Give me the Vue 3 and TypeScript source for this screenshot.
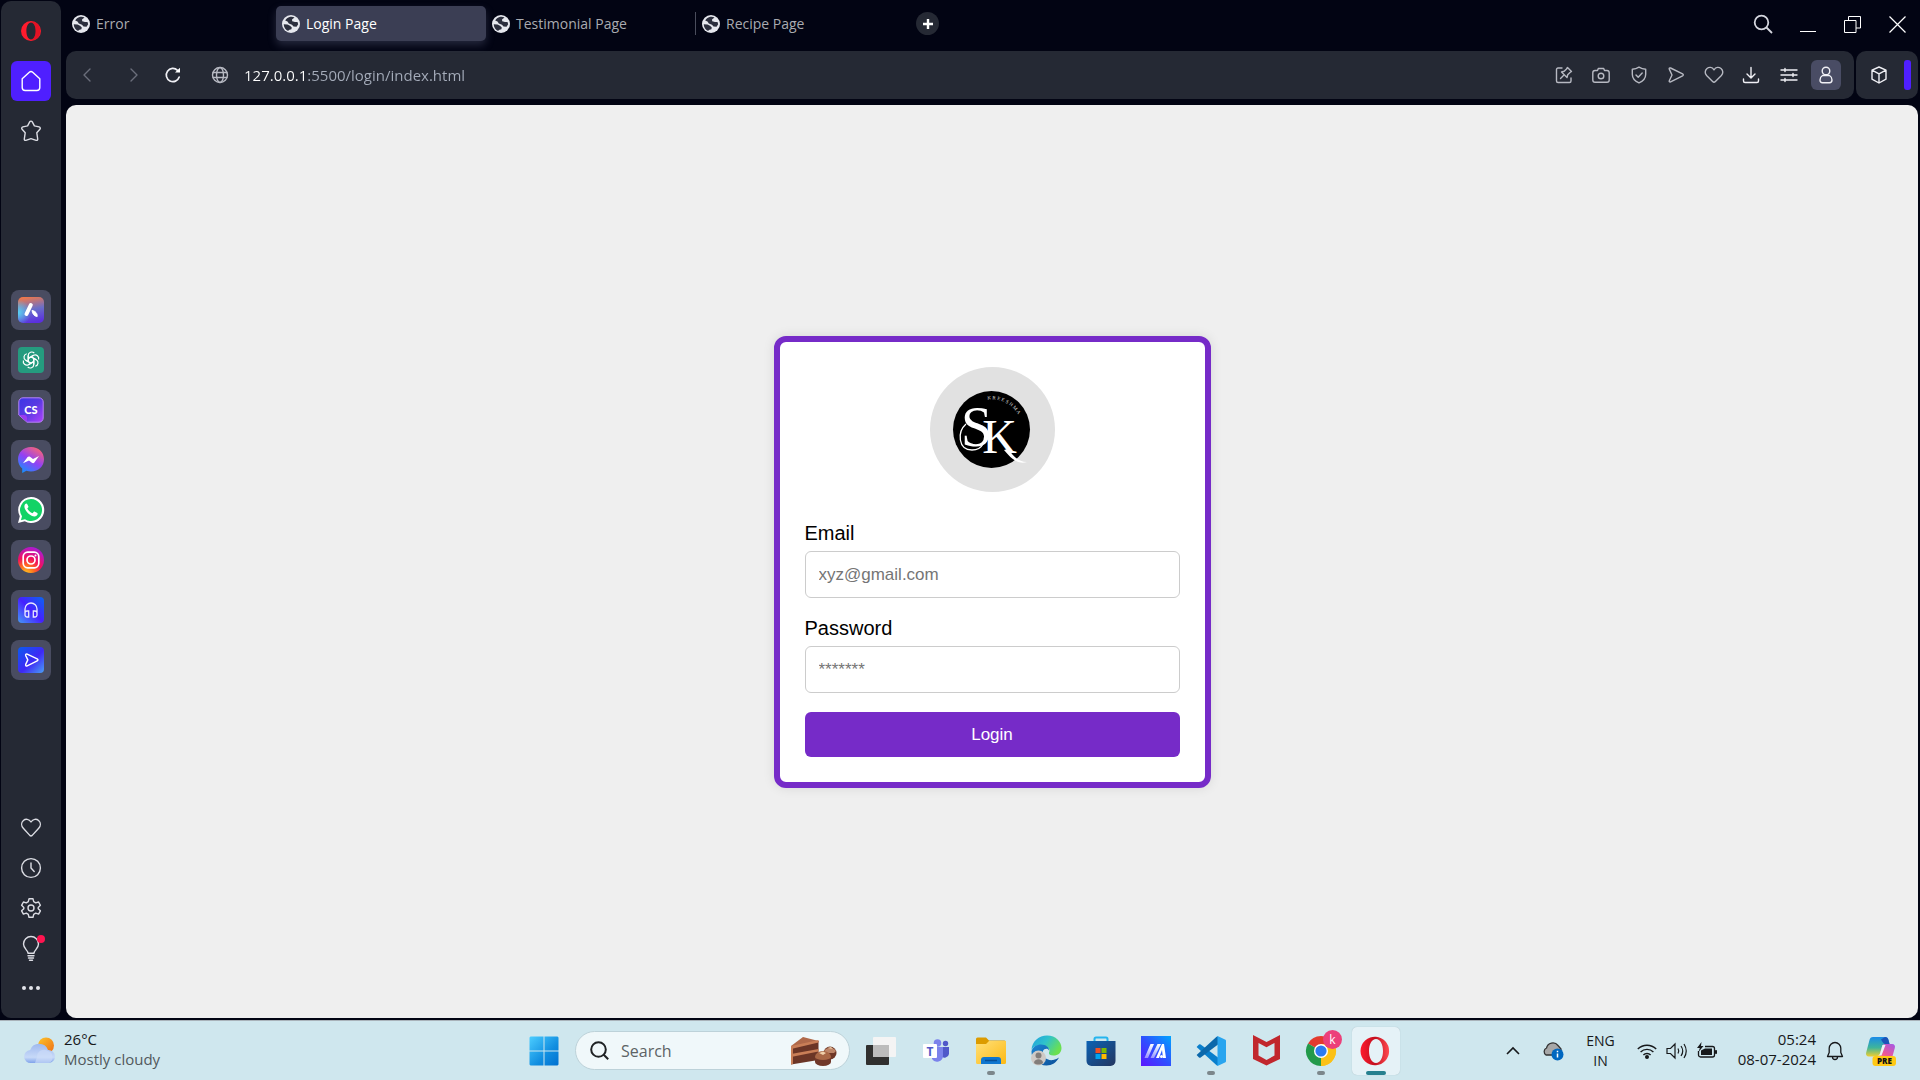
<script setup lang="ts">
import { ref } from 'vue'

interface Tab {
  id: number
  title: string
}

const tabs: Tab[] = [
  { id: 1, title: 'Error' },
  { id: 2, title: 'Login Page' },
  { id: 3, title: 'Testimonial Page' },
  { id: 4, title: 'Recipe Page' },
]
const activeTab = ref(2)
const address = ref('127.0.0.1:5500/login/index.html')
const email = ref('')
const password = ref('')
const query = ref('')
</script>

<template>
  <div class="desktop">
    <div class="browser">
      <aside class="sidebar">
        <button class="side-btn" type="button" aria-label="Opera menu">
          <svg width="20" height="20" viewBox="0 0 20 20">
            <path fill="#ff1b2d" fill-rule="evenodd" d="M10 0a10 10 0 1 0 0 20a10 10 0 0 0 0-20zM10 1.600c2.800 0 4.600 3.800 4.600 8.400s-1.800 8.400-4.600 8.400S5.400 14.600 5.400 10S7.200 1.600 10 1.600z" />
            <path fill="#a70014" d="M10 1.600c2-1 4.500-.4 6.200 1c2.300 2 3 4.600 3 7.400s-.8 5.600-3 7.400c-1.700 1.400-4.200 2-6.200 1c2.800 0 4.600-3.800 4.600-8.400S12.800 1.600 10 1.600z" opacity=".3" />
          </svg>
        </button>
        <button class="side-btn home" type="button" aria-label="Home">
          <svg class="line" width="22" height="22" viewBox="0 0 22 22">
            <path d="M2.200 8.800L9.300 2.200a2.500 2.500 0 0 1 3.400 0l7.100 6.600v8.700a3 3 0 0 1-3 3H5.200a3 3 0 0 1-3-3z" />
          </svg>
        </button>
        <button class="side-btn" type="button" aria-label="Bookmarks">
          <svg class="line" width="22" height="22" viewBox="0 0 22 22">
            <path d="M9.700 1.900c.6-1.100 2-1.100 2.600 0l2.100 4l4.700 1c1.200.3 1.600 1.500.8 2.400l-3.100 3.500l.9 6.200c.1 1-.6 1.600-1.600 1.300L11 18.700l-5.100 1.600c-1 .3-1.700-.3-1.600-1.300l.9-6.200l-3.100-3.500c-.8-.9-.4-2.100.8-2.400l4.700-1z" />
          </svg>
        </button>

        <nav class="apps" aria-label="Apps">
          <button class="side-btn app" type="button" aria-label="Aria">
            <svg width="26" height="26" viewBox="0 0 26 26">
              <defs>
                <linearGradient id="aria" x1="0.300" y1="0" x2="0.500" y2="1">
                  <stop offset="0" stop-color="#f0784a" /><stop offset=".5" stop-color="#6a6fc8" /><stop offset="1" stop-color="#5b2fe0" />
                </linearGradient>
                <radialGradient id="ariaglow" cx="0" cy=".6" r=".5">
                  <stop offset="0" stop-color="#58d3f5" /><stop offset="1" stop-color="#58d3f5" stop-opacity="0" />
                </radialGradient>
              </defs>
              <rect width="26" height="26" rx="5" fill="url(#aria)" /><rect width="26" height="26" rx="5" fill="url(#ariaglow)" />
              <path d="M12.800 8L8.500 17" stroke="#fff" stroke-width="4" stroke-linecap="round" />
              <path d="M14 13.500c3.500.5 5.500 3 5.200 6c-3-.2-4.700-2.700-5.200-6z" fill="#fff" stroke="#fff" />
            </svg>
          </button>
          <button class="side-btn app" type="button" aria-label="ChatGPT">
            <svg width="26" height="26" viewBox="0 0 26 26">
              <rect width="26" height="26" rx="4" fill="#259b7f" />
              <g fill="none" stroke="#fff" stroke-width="1.200" stroke-linejoin="round">
                <path v-for="n in 6" :key="n" :transform="`rotate(${n * 60} 13 13)`" d="M10.200 14.600V8.500a3.500 3.500 0 0 1 6.100-2.300M13 9.800l5.200 3" />
              </g>
            </svg>
          </button>
          <button class="side-btn app" type="button" aria-label="ChatSonic">
            <svg width="26" height="26" viewBox="0 0 26 26">
              <defs>
                <linearGradient id="sonic" x1="0" y1="0" x2="1" y2="1">
                  <stop offset="0" stop-color="#3a35e6" /><stop offset=".5" stop-color="#5a3ae2" /><stop offset="1" stop-color="#b040ff" />
                </linearGradient>
              </defs>
              <path d="M5 .8h16A4.200 4.200 0 0 1 25.200 5v16a4.200 4.200 0 0 1-4.200 4.200H9L.8 18V5A4.200 4.200 0 0 1 5 .8z" fill="url(#sonic)" stroke="#b583f5" />
              <path d="M1 18l8 7v-4a3 3 0 0 0-3-3z" fill="#9a3cf0" />
              <text x="13" y="17" text-anchor="middle" font-family="Lato, sans-serif" font-weight="900" font-size="11" fill="#fff">CS</text>
            </svg>
          </button>
          <button class="side-btn app" type="button" aria-label="Messenger">
            <svg width="26" height="26" viewBox="0 0 26 26">
              <defs>
                <linearGradient id="msgr" x1=".2" y1="1" x2=".8" y2="0">
                  <stop offset="0" stop-color="#1292ff" /><stop offset=".5" stop-color="#9340f5" /><stop offset="1" stop-color="#ff6670" />
                </linearGradient>
              </defs>
              <path d="M13 0C5.500 0 0 5.300 0 12.200c0 3.900 1.600 7 4.200 9.200V26l4.200-2.200c1.400.5 3 .7 4.600.7c7.500 0 13-5.300 13-12.300S20.500 0 13 0z" fill="url(#msgr)" />
              <path d="M5 16.300l4.600-6.200c.7-.9 1.700-.8 2.400-.3l3 2.300l6-3.200l-4.600 6.600c-.7.900-1.700.9-2.500.3l-2.900-2.200z" fill="#fff" />
            </svg>
          </button>
          <button class="side-btn app" type="button" aria-label="WhatsApp">
            <svg width="26" height="26" viewBox="0 0 26 26">
              <path d="M13 0a13 13 0 0 0-11.200 19.300L0 26l6.800-1.700A13 13 0 1 0 13 0z" fill="#fff" />
              <path d="M13 2a11 11 0 0 0-9 17.200L2.900 23.200l4.100-1A11 11 0 1 0 13 2z" fill="#12d366" />
              <path d="M9.300 7.200c-.5-1-1.300-.8-2-.1c-1.600 1.700-1 4.400 1 7.100s5 4.900 8 5.200c1.600.1 3-.9 3.300-2.200c.2-.9 0-1.100-.7-1.500l-2.100-1c-.5-.2-.8-.1-1.200.4l-1 1.200c-2.400-.8-4.300-2.500-5.300-4.700l1-1.300c.2-.3.200-.6.100-.9z" fill="#fff" />
            </svg>
          </button>
          <button class="side-btn app" type="button" aria-label="Instagram">
            <svg width="26" height="26" viewBox="0 0 26 26">
              <defs>
                <radialGradient id="insta" cx=".3" cy="1.050" r="1.150">
                  <stop offset="0" stop-color="#ffd020" /><stop offset=".3" stop-color="#ff6a20" /><stop offset=".55" stop-color="#f3105c" /><stop offset="1" stop-color="#a01ce8" />
                </radialGradient>
              </defs>
              <circle cx="13" cy="13" r="13" fill="url(#insta)" />
              <g fill="none" stroke="#fff" stroke-width="1.700">
                <rect x="5.200" y="5.200" width="15.600" height="15.600" rx="4.500" /><circle cx="13" cy="13" r="4" />
              </g>
              <circle cx="17.500" cy="8.500" r="1" fill="#fff" />
            </svg>
          </button>
          <button class="side-btn app" type="button" aria-label="Player">
            <svg width="26" height="26" viewBox="0 0 26 26">
              <defs>
                <linearGradient id="player" x1="1" y1="0" x2="0" y2="1">
                  <stop offset="0" stop-color="#0a66f0" /><stop offset=".5" stop-color="#4620ff" /><stop offset="1" stop-color="#459af5" />
                </linearGradient>
              </defs>
              <rect width="26" height="26" rx="4" fill="url(#player)" />
              <path d="M7 16V12a6 6 0 0 1 12 0v4M10.700 14v6H9.300a2 2 0 0 1-2.300-2v-2a2 2 0 0 1 2.300-2zM15.300 14v6h1.400a2 2 0 0 0 2.300-2v-2a2 2 0 0 0-2.300-2z" fill="none" stroke="#e8e8ff" stroke-width="1.300" />
            </svg>
          </button>
          <button class="side-btn app" type="button" aria-label="My Flow">
            <svg width="26" height="26" viewBox="0 0 26 26">
              <defs>
                <linearGradient id="flow" x1="0" y1="0" x2="1" y2="1">
                  <stop offset="0" stop-color="#0a5cf0" /><stop offset=".55" stop-color="#3f28f5" /><stop offset="1" stop-color="#4aa0f5" />
                </linearGradient>
              </defs>
              <rect width="26" height="26" rx="4" fill="url(#flow)" />
              <path d="M9.200 7.200l10 4.600c1 .5 1 1.500 0 2l-10 5c-1.100.5-1.900-.4-1.500-1.400l2.100-4.500l-2.100-4.300c-.4-1 .4-1.900 1.500-1.400z" fill="none" stroke="#fff" stroke-width="1.400" stroke-linejoin="round" />
            </svg>
          </button>
        </nav>

        <div class="side-bottom">
          <button class="side-btn" type="button" aria-label="Pinboards">
            <svg class="line" width="22" height="22" viewBox="0 0 22 22">
              <path d="M11 5C9 1.800 5.500 1.700 3.400 3.500C1 5.700 1.200 9 3.300 11.300l6.500 7.100c.8.700 1.600.7 2.400 0l6.500-7.100C20.800 9 21 5.700 18.600 3.500C16.500 1.700 13 1.800 11 5z" />
            </svg>
          </button>
          <button class="side-btn" type="button" aria-label="History">
            <svg class="line" width="22" height="22" viewBox="0 0 22 22">
              <circle cx="11" cy="11" r="9.400" /><path d="M11 6v5l3.200 3.500" />
            </svg>
          </button>
          <button class="side-btn" type="button" aria-label="Settings">
            <svg class="line" width="22" height="22" viewBox="0 0 22 22">
              <path d="M9 1.800h4l.7 2.900l2 1.200l2.900-.9l1.800 3.300L18.200 10.400v1.300l2.200 2.100l-1.800 3.300l-2.900-.9l-2 1.200l-.7 2.900H9l-.7-2.900l-2-1.200l-2.900.9l-1.800-3.300l2.200-2.100v-1.300L1.600 8.300L3.400 5l2.900.9l2-1.200z" /><circle cx="11" cy="11" r="3" />
            </svg>
          </button>
          <button class="side-btn" type="button" aria-label="Tips">
            <svg class="line" width="28" height="26" viewBox="0 0 28 26">
              <path d="M11 18.300c0-3-4.500-4.800-4.500-9.300a7.500 7.500 0 0 1 15 0c0 4.500-4.500 6.300-4.500 9.300zM11 20.700h6M11.500 23h5M12.500 25.200h3" />
              <circle cx="24" cy="4" r="4" class="dot" />
            </svg>
          </button>
          <button class="side-btn" type="button" aria-label="More">
            <svg width="20" height="6" viewBox="0 0 20 6" fill="#e3e4ea">
              <circle cx="3" cy="3" r="2" /><circle cx="10" cy="3" r="2" /><circle cx="17" cy="3" r="2" />
            </svg>
          </button>
        </div>
      </aside>

      <div class="main">
        <div class="tab-row">
          <div class="tabs" role="tablist">
            <button
              v-for="tab in tabs"
              :key="tab.id"
              type="button"
              role="tab"
              class="tab"
              :class="{ active: tab.id === activeTab, divided: tab.id > activeTab + 1 }"
              :aria-selected="tab.id === activeTab"
              @click="activeTab = tab.id"
            >
              <svg width="18" height="18" viewBox="0 0 18 18">
                <circle cx="9" cy="9" r="9" fill="#e6e8ee" />
                <path d="M7 2.200c2-.8 4-.6 5.500.2L10 4.500l.2 1.800L13 7h2.500l.7 2.200l-1.700 2.600l-3-.2L10 9.800L6.800 8.500L5.500 6.500L3.200 5.500C4 3.800 5.400 2.700 7 2.200z" fill="#2b2e3d" />
                <path d="M1.700 9.200l3.800.3l2.500 1.300l1.800 1.700l-.4 1.800l-2.600.7l-.6 1C3.700 15 1.800 12.500 1.700 9.200z" fill="#2b2e3d" />
              </svg>
              <span>{{ tab.title }}</span>
            </button>
          </div>
          <button class="new-tab" type="button" aria-label="New tab">
            <svg width="10" height="10" viewBox="0 0 10 10"><path d="M5 0v10M0 5h10" stroke="#fff" stroke-width="2.400" /></svg>
          </button>
          <div class="window-controls">
            <button type="button" aria-label="Search tabs">
              <svg width="20" height="20" viewBox="0 0 20 20" fill="none" stroke="#d4d6de" stroke-width="1.800"><circle cx="8.500" cy="8.500" r="6.800" /><path d="M13.500 13.500l5.500 5.500" /></svg>
            </button>
            <button type="button" aria-label="Minimize">
              <svg width="16" height="16" viewBox="0 0 16 16"><path d="M0 15.500h16" stroke="#fff" /></svg>
            </button>
            <button type="button" aria-label="Restore">
              <svg width="17" height="17" viewBox="0 0 17 17" fill="none" stroke="#fff"><path d="M.5 4.500h11.500v12H.5zM4.500 4.500v-4h12v11.500h-4.500" /></svg>
            </button>
            <button type="button" aria-label="Close">
              <svg width="17" height="17" viewBox="0 0 17 17" fill="none" stroke="#fff" stroke-width="1.200"><path d="M.5.5l16 16M16.500.5l-16 16" /></svg>
            </button>
          </div>
        </div>

        <div class="toolbar-row">
          <div class="toolbar">
            <div class="nav">
              <button class="dim back" type="button" aria-label="Back">
                <svg class="line" width="14" height="14" viewBox="0 0 14 14"><path d="M10 1L4 7l6 6" /></svg>
              </button>
              <button class="dim" type="button" aria-label="Forward">
                <svg class="line" width="14" height="14" viewBox="0 0 14 14"><path d="M4 1l6 6l-6 6" /></svg>
              </button>
              <button class="bright" type="button" aria-label="Reload">
                <svg class="line" width="16" height="16" viewBox="0 0 16 16"><path d="M14.200 10A6.600 6.600 0 1 1 12.500 3.300" stroke-width="1.700" /><path d="M10 5.500h5V.8z" fill="#fff" stroke="none" /></svg>
              </button>
            </div>
            <label class="address">
              <svg class="line" width="18" height="18" viewBox="0 0 18 18" aria-hidden="true">
                <circle cx="9" cy="9" r="7.500" /><ellipse cx="9" cy="9" rx="3.500" ry="7.500" /><path d="M2.200 6.500h13.600M2.200 11.500h13.600" />
              </svg>
              <input v-model="address" type="text" aria-label="Address" spellcheck="false" />
            </label>
            <div class="actions">
              <button type="button" aria-label="Edit page">
                <svg class="line" width="18" height="18" viewBox="0 0 18 18">
                  <path d="M7 2H3a1.500 1.500 0 0 0-1.500 1.500v11.500a1.500 1.500 0 0 0 1.500 1.500h11.500a1.500 1.500 0 0 0 1.500-1.500V12" />
                  <path d="M12.500 1.500l4 4l-1.500 1l-2.300 2.300l-.7 2.700l-5.500-5.500l2.700-.7L11.500 3zM9 9L5.500 12.500" />
                </svg>
              </button>
              <button type="button" aria-label="Snapshot">
                <svg class="line" width="18" height="18" viewBox="0 0 18 18"><path d="M5.500 4.500L6.300 2.500h5.400l.8 2h2.500A2.200 2.200 0 0 1 17.200 6.700v7.300a2.200 2.200 0 0 1-2.200 2.200H3A2.200 2.200 0 0 1 .8 14V6.700A2.200 2.200 0 0 1 3 4.500z" /><circle cx="9" cy="10" r="2.800" /></svg>
              </button>
              <button type="button" aria-label="Ad blocker">
                <svg class="line" width="18" height="18" viewBox="0 0 18 18"><path d="M9 1.200c2 1.300 4.200 2 6.700 2v5c0 4-2.400 6.800-6.700 8.600c-4.300-1.800-6.700-4.600-6.700-8.600v-5c2.500 0 4.700-.7 6.700-2zM6 9l2.200 2.200l4-4.200" /></svg>
              </button>
              <button type="button" aria-label="Send to My Flow">
                <svg class="line" width="18" height="18" viewBox="0 0 18 18"><path d="M3.600 2l12 5.900c.9.500.9 1.400 0 1.900l-12 6c-1 .4-1.700-.2-1.300-1.100L5 9L2.300 3.100C1.900 2.200 2.600 1.600 3.600 2z" /></svg>
              </button>
              <button type="button" aria-label="Add to pinboard">
                <svg class="line" width="20" height="18" viewBox="0 0 20 18"><path d="M10 3.800C8 .8 5 .9 3 2.500C.7 4.500.7 7.500 2.600 9.500l6 6c.9.900 1.900.9 2.800 0l6-6C19.300 7.500 19.300 4.500 17 2.500C15 .9 12 .8 10 3.800z" /></svg>
              </button>
              <button class="bright" type="button" aria-label="Downloads">
                <svg class="line" width="18" height="18" viewBox="0 0 18 18"><path d="M9 1.500v10M5 8l4 4l4-4M1.500 13v2a1.500 1.500 0 0 0 1.500 1.500h12a1.500 1.500 0 0 0 1.500-1.500v-2" /></svg>
              </button>
              <button class="bright" type="button" aria-label="Easy setup">
                <svg class="line" width="18" height="18" viewBox="0 0 18 18"><path d="M1 4h16M1 9h16M1 14h16M5 2.500v3M13 7.500v3M5 12.500v3" /></svg>
              </button>
              <button class="bright profile" type="button" aria-label="Profile">
                <svg class="line" width="18" height="18" viewBox="0 0 18 18"><circle cx="9" cy="5" r="3.800" /><path d="M5.500 9.500h7c1.700 1 2.500 2.700 2.500 4.500c0 1.700-.9 2.700-2.500 2.700h-7C3.900 16.700 3 15.700 3 14c0-1.800.8-3.500 2.500-4.500z" /></svg>
              </button>
            </div>
          </div>
          <div class="side-panel">
            <button class="bright" type="button" aria-label="Extensions">
              <svg class="line" width="18" height="18" viewBox="0 0 18 18"><path d="M9 1l7 3.200v9L9 17l-7-3.800v-9zM2 4.200l7 3.600l7-3.600M9 7.800V17" /></svg>
            </button>
            <span class="accent"></span>
          </div>
        </div>

        <main class="page">
          <form class="card" @submit.prevent>
            <div class="avatar">
              <svg width="125" height="125" viewBox="0 0 125 125" role="img" aria-label="SK logo">
                <circle cx="61.500" cy="62.500" r="38.500" fill="#000" />
                <path id="arc" d="M57.500 32.500A31 31 0 0 1 92 58" fill="none" />
                <text font-family="Liberation Serif, serif" font-size="5" fill="#ddd"><textPath href="#arc">K R E E S H M A</textPath></text>
                <text font-family="Liberation Serif, serif" fill="#fff" x="31" y="79" font-size="56">S<tspan dx="-10" dy="7" font-size="48">K</tspan></text>
                <path d="M36 57c-9 8-8 26 6 26c5 0 9-2 11-6" fill="none" stroke="#fff" stroke-width="1.300" />
                <path d="M78 82c5 6 9 13 19 13c-10 3-17-5-23-12z" fill="#fff" />
              </svg>
            </div>
            <div class="field">
              <label for="email">Email</label>
              <input id="email" v-model="email" type="email" placeholder="xyz@gmail.com" />
            </div>
            <div class="field">
              <label for="password">Password</label>
              <input id="password" v-model="password" type="password" placeholder="*******" />
            </div>
            <button class="login" type="submit">Login</button>
          </form>
        </main>
      </div>
    </div>

    <footer class="taskbar">
      <button class="weather" type="button">
        <svg width="32" height="28" viewBox="0 0 32 28">
          <defs>
            <linearGradient id="sun" x1="0" y1="0" x2="1" y2="1"><stop offset="0" stop-color="#fdc52a" /><stop offset="1" stop-color="#ee6c16" /></linearGradient>
            <linearGradient id="cloud" x1="0" y1="0" x2="0" y2="1"><stop offset="0" stop-color="#9fb9ee" /><stop offset=".7" stop-color="#c7d9f8" /><stop offset="1" stop-color="#7fa3ea" /></linearGradient>
          </defs>
          <circle cx="22" cy="8.500" r="8" fill="url(#sun)" />
          <path d="M7 26a6.500 6.500 0 0 1-.8-13A9.500 9.500 0 0 1 24 13a6.500 6.500 0 0 1 1 13z" fill="url(#cloud)" />
          <path d="M13 20a7 7 0 0 1 11-6a6.500 6.500 0 0 1 1 12H11z" fill="#cfdef9" opacity=".6" />
        </svg>
        <span class="stack"><span>26°C</span><span class="muted">Mostly cloudy</span></span>
      </button>

      <div class="task-icons">
        <button class="task" type="button" aria-label="Start">
          <svg width="30" height="30" viewBox="0 0 30 30">
            <defs><linearGradient id="win" x1="0" y1="0" x2="1" y2="1"><stop offset="0" stop-color="#4ccdff" /><stop offset=".6" stop-color="#118ee0" /><stop offset="1" stop-color="#0070d0" /></linearGradient></defs>
            <path d="M1.500.5H14.500v14H.5v-13zM15.500.5h13l1 1v13h-14zM.5 15.500h14v14h-13l-1-1zM15.500 15.500h14v13l-1 1h-13z" fill="url(#win)" />
          </svg>
        </button>
        <label class="search">
          <svg width="19" height="19" viewBox="0 0 19 19" fill="none" stroke="#1f2224" stroke-width="2" aria-hidden="true"><circle cx="8.500" cy="8.500" r="7.300" /><path d="M13.500 13.500l4.700 4.700" /></svg>
          <input v-model="query" type="text" placeholder="Search" aria-label="Search" />
          <svg width="46" height="30" viewBox="0 0 46 30" aria-hidden="true">
            <path d="M0 10L12 1l15.500 4L27.500 6L0 12z" fill="#b0694a" /><path d="M0 11l27.500-6v19L0 28.500z" fill="#6b3526" />
            <path d="M0 10l27.500-6v2.500L0 13zM0 18l27.500-5v2.500L0 21z" fill="#c97e57" /><path d="M0 10l2 1v17l-2 .5z" fill="#c97e57" />
            <circle cx="39" cy="17" r="6.500" fill="#6e3727" /><path d="M33 15a6.500 5 0 0 1 12 0l-2 2h-8z" fill="#bd8467" />
            <path d="M24 20h16v6a8 4 0 0 1-16 0z" fill="#70382a" /><path d="M24 21a8 6 0 0 1 16 0a8 3 0 0 1-16 0z" fill="#a96746" /><path d="M28 17l4-1.500l3 1.500l-3 2zM36 12l4-1l2 2z" fill="#f0cfaa" />
          </svg>
        </label>
        <button class="task" type="button" aria-label="Task view">
          <svg width="30" height="30" viewBox="0 0 30 30">
            <rect x="0" y="9" width="23" height="20" rx="1" fill="#30302f" /><rect x="7" y="1" width="23" height="20" rx="1" fill="#f4f4f4" /><path d="M7 9h16v12H7z" fill="#bcbcbc" />
          </svg>
        </button>
        <button class="task" type="button" aria-label="Teams">
          <svg width="26" height="26" viewBox="0 0 26 26">
            <circle cx="14.500" cy="5" r="3.800" fill="#7b83eb" /><circle cx="22.500" cy="5.500" r="2.700" fill="#5059c9" />
            <path d="M18 9h8v7a4.500 4.500 0 0 1-8 2z" fill="#5059c9" /><path d="M9 9h11v9a6 6 0 0 1-11 3z" fill="#7b83eb" />
            <rect x="0" y="6" width="14" height="14" rx="1" fill="#fff" /><text x="7" y="17.500" text-anchor="middle" font-family="Open Sans, sans-serif" font-weight="700" font-size="12" fill="#5059c9">T</text>
          </svg>
        </button>
        <button class="task running" type="button" aria-label="File Explorer">
          <svg width="30" height="28" viewBox="0 0 30 28">
            <defs><linearGradient id="folder" x1="0" y1="0" x2="1" y2="1"><stop offset="0" stop-color="#ffe07a" /><stop offset="1" stop-color="#fdb913" /></linearGradient></defs>
            <path d="M0 2a1.500 1.500 0 0 1 1.500-1.500H10L13 3.500H28.500A1.500 1.500 0 0 1 30 5v4H0z" fill="#dc9b00" /><path d="M0 7h10l3-3h17v21.500a1.500 1.500 0 0 1-1.500 1.500h-27A1.500 1.500 0 0 1 0 25.500z" fill="url(#folder)" />
            <path d="M5 27v-4a3 3 0 0 1 3-3h14a3 3 0 0 1 3 3v4z" fill="#0f76cf" /><path d="M9 23.500h12" stroke="#064f96" stroke-width="1.500" />
          </svg>
        </button>
        <button class="task" type="button" aria-label="Edge">
          <svg width="31" height="31" viewBox="0 0 31 31">
            <defs>
              <linearGradient id="edge1" x1="0" y1="0" x2="1" y2=".5"><stop offset="0" stop-color="#1f9fe0" /><stop offset=".5" stop-color="#2fc2cc" /><stop offset="1" stop-color="#6be050" /></linearGradient>
              <linearGradient id="edge2" x1="0" y1="0" x2="1" y2="1"><stop offset="0" stop-color="#1b86d4" /><stop offset="1" stop-color="#0c4f98" /></linearGradient>
            </defs>
            <path d="M.5 15C1 6 8 .5 16 .5c9 0 14.500 6.500 14.500 12.500c0 5-3.500 7.500-8 7.500c-3.500 0-5-1.300-4.500-3C20 14 16 10 10 10c-5 0-8 2-9.500 5z" fill="url(#edge1)" />
            <path d="M.5 16C2 11.500 6 9.500 10 9.500c5 0 8.500 3 8 6c-1-2.500-5-2-6 .5c-2 5 4 10 10 9c2.500-.4 4.500-1.500 6-2.500c-2.500 5-7 8-12.500 8C7 30.500 0 24 .5 16z" fill="url(#edge2)" />
            <circle cx="7.500" cy="23" r="7.500" fill="#cfcac6" /><circle cx="7.500" cy="20.500" r="3" fill="#827d7a" /><path d="M3 28c0-5 9-5 9 0c-2.500 2-6.500 2-9 0z" fill="#827d7a" />
          </svg>
        </button>
        <button class="task" type="button" aria-label="Microsoft Store">
          <svg width="30" height="30" viewBox="0 0 30 30">
            <defs><linearGradient id="store" x1="0" y1="0" x2="1" y2="1"><stop offset="0" stop-color="#0b62b4" /><stop offset="1" stop-color="#24365f" /></linearGradient></defs>
            <path d="M8.500 6V3A1.500 1.500 0 0 1 10 1.500h10A1.500 1.500 0 0 1 21.500 3v3" fill="none" stroke="#25b5ee" stroke-width="2" />
            <path d="M.5 5h29v20a5 5 0 0 1-5 5h-19a5 5 0 0 1-5-5z" fill="url(#store)" />
            <path d="M9.500 12h5v5h-5z" fill="#f25022" /><path d="M15.500 12h5v5h-5z" fill="#7fba00" /><path d="M9.500 18h5v5h-5z" fill="#00a4ef" /><path d="M15.500 18h5v5h-5z" fill="#ffb900" />
          </svg>
        </button>
        <button class="task" type="button" aria-label="MyASUS">
          <svg width="30" height="30" viewBox="0 0 30 30">
            <defs>
              <linearGradient id="asus" x1="0" y1="1" x2="1" y2="0"><stop offset="0" stop-color="#5c15ff" /><stop offset=".5" stop-color="#2f50ff" /><stop offset="1" stop-color="#00a5ff" /></linearGradient>
              <linearGradient id="bar" x1="0" y1="0" x2="0" y2="1"><stop offset="0" stop-color="#fff" /><stop offset="1" stop-color="#fff" stop-opacity=".45" /></linearGradient>
            </defs>
            <rect width="30" height="30" fill="url(#asus)" />
            <path d="M3.500 22L9.500 8h3.500l-6 14zM9.500 22L16.500 8H20l-7 14z" fill="url(#bar)" />
            <path d="M15 22L21 8h2l2 14h-3l-1-8l-3 8z" fill="#fff" /><circle cx="20.500" cy="20.500" r="1.500" fill="#fff" />
          </svg>
        </button>
        <button class="task running" type="button" aria-label="Visual Studio Code">
          <svg width="30" height="30" viewBox="0 0 30 30">
            <path d="M.6 11L3 8.500q.8-.6 1.700 0L22 21.500v8q-1 .3-2-.7z" fill="#0a7fcc" /><path d="M.6 19L3 21.500q.8.600 1.700 0L22 8.500v-8q-1-.3-2 .7z" fill="#0b68ab" />
            <path d="M22 .3l7 3.200a1.500 1.500 0 0 1 1 1.500v20a1.500 1.500 0 0 1-1 1.500l-7 3.200c-1 .3-1.500 0-2-.5c.8.600 1.500 0 1.500-1V1.800c0-1-.7-1.600-1.500-1C20.500.3 21 0 22 .3z" fill="#29a5ef" />
          </svg>
        </button>
        <button class="task" type="button" aria-label="McAfee">
          <svg width="27" height="31" viewBox="0 0 27 31">
            <path d="M0 0l13.500 7L27 0v24l-13.500 6.500L0 24zM5.500 8v12.500l8 4.500l8-4.500V8l-8 4.200z" fill="#c1272d" fill-rule="evenodd" />
          </svg>
        </button>
        <button class="task running" type="button" aria-label="Chrome">
          <svg width="30" height="30" viewBox="0 0 30 30">
            <path d="M15 15L2 7.500A15 15 0 0 1 28 7.500z" fill="#e33b2e" /><path d="M15 15L28 7.500A15 15 0 0 1 15 30z" fill="#fbc116" /><path d="M15 15v15A15 15 0 0 1 2 7.500z" fill="#229a4a" />
            <path d="M15 8h13.200A15 15 0 0 1 15 30l6-11z" fill="#fbc116" /><circle cx="15" cy="15" r="7" fill="#fff" /><circle cx="15" cy="15" r="5.600" fill="#2d7bf0" />
          </svg>
          <span class="badge">k</span>
        </button>
        <button class="task running current" type="button" aria-label="Opera">
          <svg width="30" height="30" viewBox="0 0 30 30">
            <defs><linearGradient id="op" x1="0" y1="0" x2="1" y2="0"><stop offset="0" stop-color="#ff1b2d" /><stop offset=".5" stop-color="#c2101f" /><stop offset="1" stop-color="#ff4a50" /></linearGradient></defs>
            <path fill="url(#op)" fill-rule="evenodd" d="M15 .8a14.300 14.300 0 1 0 0 28.500a14.300 14.300 0 0 0 0-28.500zM15 3c4.200 0 7 5.400 7 12s-2.800 12-7 12s-7-5.400-7-12S10.800 3 15 3z" />
          </svg>
        </button>
      </div>

      <div class="tray">
        <button type="button" aria-label="Hidden icons">
          <svg width="14" height="10" viewBox="0 0 14 10" fill="none" stroke="#17191b" stroke-width="1.600"><path d="M1 8l6-6l6 6" /></svg>
        </button>
        <button type="button" aria-label="OneDrive">
          <svg width="22" height="20" viewBox="0 0 22 20">
            <path d="M4 14a4 4 0 0 1 .5-7A6.500 6.500 0 0 1 16 4.500L19 8v6z" fill="#a7a7a7" stroke="#333" stroke-width="1.300" />
            <circle cx="15.500" cy="13.500" r="6" fill="#0067c0" /><path d="M15.500 12.500v4M15.500 9.800v1.500" stroke="#fff" stroke-width="1.500" />
          </svg>
        </button>
        <button class="lang" type="button"><span>ENG</span><span>IN</span></button>
        <button class="status" type="button" aria-label="Network, volume and battery">
          <svg width="20" height="16" viewBox="0 0 20 16" fill="none" stroke="#17191b" stroke-width="1.400">
            <path d="M.8 6a13 13 0 0 1 18.400 0M3.600 9a9 9 0 0 1 12.800 0M6.400 12a5 5 0 0 1 7.200 0" /><circle cx="10" cy="14" r="1.300" fill="#17191b" />
          </svg>
          <svg width="22" height="18" viewBox="0 0 22 18" fill="none" stroke="#17191b" stroke-width="1.200">
            <path d="M1 6.500h3.500L9 2v14l-4.500-4.500H1zM12 6.500q1.500 2.500 0 5M15 4q3.500 5 0 10M18 2q4.500 7 0 14" />
          </svg>
          <svg width="19" height="17" viewBox="0 0 19 17">
            <path d="M8 4.500h7.500a2 2 0 0 1 2 2v6.500a2 2 0 0 1-2 2H3.500a2 2 0 0 1-2-2v-4" fill="none" stroke="#17191b" stroke-width="1.300" /><path d="M4 8.500l4-2h7v6.500H4z" fill="#17191b" /><path d="M18.500 8.500h1v3h-1z" fill="#17191b" stroke="#17191b" /><path d="M4.500 0L0 6h2.800L1.500 10L6.500 4H4z" fill="#17191b" />
          </svg>
        </button>
        <div class="clock-group">
          <button class="clock" type="button"><span>05:24</span><span>08-07-2024</span></button>
          <button type="button" aria-label="Notifications">
            <svg width="18" height="20" viewBox="0 0 18 20" fill="none" stroke="#17191b" stroke-width="1.300" stroke-linejoin="round"><path d="M9 1.500a5.800 5.800 0 0 1 5.800 5.800v4.200l1.700 4H1.500l1.700-4V7.300A5.800 5.800 0 0 1 9 1.500zM6.500 16a2.500 2.500 0 0 0 5 0" /></svg>
          </button>
        </div>
        <button type="button" aria-label="Copilot">
          <svg width="30" height="30" viewBox="0 0 30 30">
            <defs>
              <linearGradient id="cp1" x1="0" y1="0" x2="0" y2="1"><stop offset="0" stop-color="#1a8be8" /><stop offset=".55" stop-color="#3fb59a" /><stop offset="1" stop-color="#f0cf30" /></linearGradient>
              <linearGradient id="cp2" x1="1" y1="0" x2="0" y2="1"><stop offset="0" stop-color="#a259e8" /><stop offset=".6" stop-color="#ee5796" /><stop offset="1" stop-color="#ff9a50" /></linearGradient>
            </defs>
            <path d="M7 1h12c2 0 3 1 3.500 3L23.500 8h-4c-2 0-3 1-3.500 3l-2 7c-.5 1.500-1.500 2.500-3 2.500H3c-2.500 0-3.500-2-2.800-4L3.500 4C4 2 5 1 7 1z" fill="url(#cp1)" />
            <path d="M19 1c2 0 3 1 3.500 3L23.500 8h-4C17.500 8 16.500 6 15 3.500z" fill="#1c54b8" />
            <path d="M19.500 8H26c2.500 0 3.500 2 2.800 4L26 22H8c3 0 5-1.500 6-4l2-7c.5-2 1.500-3 3.500-3z" fill="url(#cp2)" /><path d="M16.500 9h3l-4 10.500h-4c1.500 0 2-1 2.500-2z" fill="#eaf4f6" />
            <rect x="6.500" y="20" width="23.500" height="10" rx="3" fill="#ffc914" /><text x="18.500" y="27.800" text-anchor="middle" font-family="Open Sans, sans-serif" font-size="8" font-weight="800" fill="#111">PRE</text>
          </svg>
        </button>
      </div>
    </footer>
  </div>
</template>

<style>
body {
  margin: 0;
}
</style>

<style scoped>
.desktop {
  min-height: 100vh;
  display: flex;
  flex-direction: column;
  font-family: "Open Sans", "Noto Sans", sans-serif;
  font-size: 14px;
}

.desktop *,
.desktop *::before {
  box-sizing: border-box;
}

button {
  display: flex;
  align-items: center;
  justify-content: center;
  padding: 0;
  border: 0;
  background: none;
  color: inherit;
  font: inherit;
  cursor: pointer;
}

input {
  min-width: 0;
  font: inherit;
}

svg {
  flex: none;
  overflow: visible;
}

.line {
  fill: none;
  stroke: currentColor;
  stroke-width: 1.4;
  stroke-linecap: round;
  stroke-linejoin: round;
}

.browser {
  flex: 1;
  display: flex;
  gap: 5px;
  padding: 0 0 2px 1px;
  background: #020413;
}

/* Sidebar */
.sidebar {
  flex: 0 0 60px;
  display: flex;
  flex-direction: column;
  align-items: center;
  gap: 10px;
  margin-top: 1px;
  padding: 10px 0;
  border-radius: 10px;
  background: #252934;
  color: #dcdde4;
}

.side-btn {
  width: 40px;
  height: 40px;
  border-radius: 8px;
}

.home {
  border-radius: 6px;
  background: #4f1fff;
  color: #fff;
}

.apps {
  display: flex;
  flex-direction: column;
  gap: 10px;
  margin-top: 129px;
}

.app {
  background: #494c61;
}

.side-bottom {
  margin-top: auto;
}

.dot {
  fill: #ff1450;
  stroke: none;
}

/* Tabs */
.main {
  flex: 1;
  min-width: 0;
  display: flex;
  flex-direction: column;
}

.tab-row {
  display: flex;
  align-items: flex-start;
  height: 51px;
}

.tabs {
  display: flex;
  flex: 0 1 840px;
  padding-top: 6px;
}

.tab {
  position: relative;
  flex: 1;
  justify-content: flex-start;
  gap: 6px;
  height: 35px;
  padding: 0 6px;
  border-radius: 5px;
  color: #a9abb0;
  line-height: 18px;
  white-space: nowrap;
}

.tab.active {
  background: #3b3e54;
  color: #fff;
  box-shadow: 0 4px 8px rgba(120, 124, 160, 0.3);
}

.tab.divided::before {
  content: "";
  position: absolute;
  left: -1px;
  top: 6px;
  width: 1px;
  height: 23px;
  background: #4a4d5c;
}

.new-tab {
  width: 23px;
  height: 23px;
  margin: 12px 0 0 10px;
  border-radius: 50%;
  background: #252934;
}

.window-controls {
  display: flex;
  margin-left: auto;
}

.window-controls button {
  width: 45px;
  height: 48px;
}

/* Toolbar */
.toolbar-row {
  display: flex;
  gap: 2px;
  margin: 0 2px 6px 0;
}

.toolbar,
.side-panel {
  display: flex;
  align-items: center;
  height: 48px;
  border-radius: 10px;
  background: #252934;
  color: #b7b9c2;
}

.toolbar {
  flex: 1;
  padding: 0 13px;
}

.nav {
  display: flex;
  gap: 23px;
}

.nav button {
  width: 16px;
  height: 30px;
}

.nav .back {
  margin-right: 8px;
}

.dim {
  color: #6b6e7b;
}

.bright {
  color: #f0f0f5;
}

.address {
  flex: 1;
  display: flex;
  align-items: center;
  gap: 15px;
  margin-left: 30px;
}

.address input {
  flex: 1;
  padding: 0;
  border: 0;
  outline: 0;
  font-size: 15px;
  line-height: 24px;
  color: transparent;
  background: linear-gradient(to right, #fff 64px, #a5acba 64px);
  -webkit-background-clip: text;
  background-clip: text;
}

.actions {
  display: flex;
  justify-content: space-between;
  width: 292px;
}

.actions button {
  width: 30px;
  height: 30px;
  border-radius: 6px;
}

.actions .profile {
  background: #494c64;
}

.side-panel {
  justify-content: space-between;
  width: 62px;
  padding: 0 7px 0 14px;
}

.accent {
  width: 7px;
  height: 30px;
  border-radius: 3px;
  background: #4f1fff;
}

/* Login page */
.page {
  flex: 1;
  display: flex;
  align-items: center;
  justify-content: center;
  margin-right: 2px;
  border-radius: 10px;
  background: #efefef;
  font-family: "Liberation Sans", Arial, sans-serif;
}

.card {
  display: flex;
  flex-direction: column;
  gap: 19px;
  width: 437px;
  padding: 25px;
  border: 6px solid #762bc8;
  border-radius: 12px;
  background: #fff;
  box-shadow: 0 0 12px rgba(0, 0, 0, 0.1);
}

.avatar {
  align-self: center;
  width: 125px;
  height: 125px;
  margin-bottom: 11px;
  border-radius: 50%;
  background: #e1e1e1;
}

.field {
  display: flex;
  flex-direction: column;
  gap: 6px;
}

.field label {
  font-size: 20px;
  line-height: 23px;
  color: #000;
}

.field input {
  height: 47px;
  padding: 2px 13px 0;
  border: 1px solid #ccc;
  border-radius: 6px;
  font-size: 17px;
}

.field input::placeholder {
  color: #757575;
}

.login {
  height: 45px;
  padding-top: 2px;
  border-radius: 6px;
  background: #762bc8;
  color: #fff;
  font-size: 17px;
}

/* Taskbar */
.taskbar {
  display: grid;
  grid-template-columns: 1fr auto 1fr;
  align-items: center;
  height: 60px;
  border-top: 1px solid #a9b3ba;
  background: #cfe7ee;
  color: #17191b;
  font-size: 15px;
  line-height: 20px;
}

.weather {
  justify-self: start;
  gap: 8px;
  margin-left: 24px;
}

.stack,
.clock,
.lang {
  display: flex;
  flex-direction: column;
}

.stack,
.clock {
  padding-bottom: 4px;
}

.stack {
  text-align: left;
}

.muted {
  color: #52595c;
}

.task-icons {
  display: flex;
  align-items: center;
  gap: 7px;
}

.task {
  position: relative;
  width: 48px;
  height: 48px;
  border-radius: 5px;
}

.running::after {
  content: "";
  position: absolute;
  bottom: 0;
  left: 20px;
  width: 8px;
  height: 4px;
  border-radius: 2px;
  background: #7c878b;
}

.current {
  background: #e5f2f7;
  box-shadow: 0 0 1px #9fb4bc;
}

.current::after {
  left: 14px;
  width: 20px;
  background: #26808f;
}

.badge {
  position: absolute;
  top: 3px;
  right: 3px;
  width: 19px;
  height: 19px;
  border-radius: 50%;
  background: #ec407a;
  color: #fff;
  font-size: 12px;
  line-height: 19px;
}

.search {
  display: flex;
  align-items: center;
  width: 275px;
  height: 39px;
  padding: 0 12px 0 14px;
  border: 1px solid #bdd2d9;
  border-radius: 20px;
  background: #f0f8fa;
}

.search input {
  flex: 1;
  padding: 0 12px;
  border: 0;
  outline: 0;
  background: none;
  font-size: 16px;
}

.search input::placeholder {
  color: #5d6365;
}

.tray {
  justify-self: end;
  display: flex;
  align-items: center;
  gap: 22px;
  margin-right: 24px;
}

.lang {
  font-size: 14px;
}

.clock {
  align-items: flex-end;
}

.status {
  gap: 9px;
}

.clock-group {
  display: flex;
  align-items: center;
  gap: 10px;
}
</style>
